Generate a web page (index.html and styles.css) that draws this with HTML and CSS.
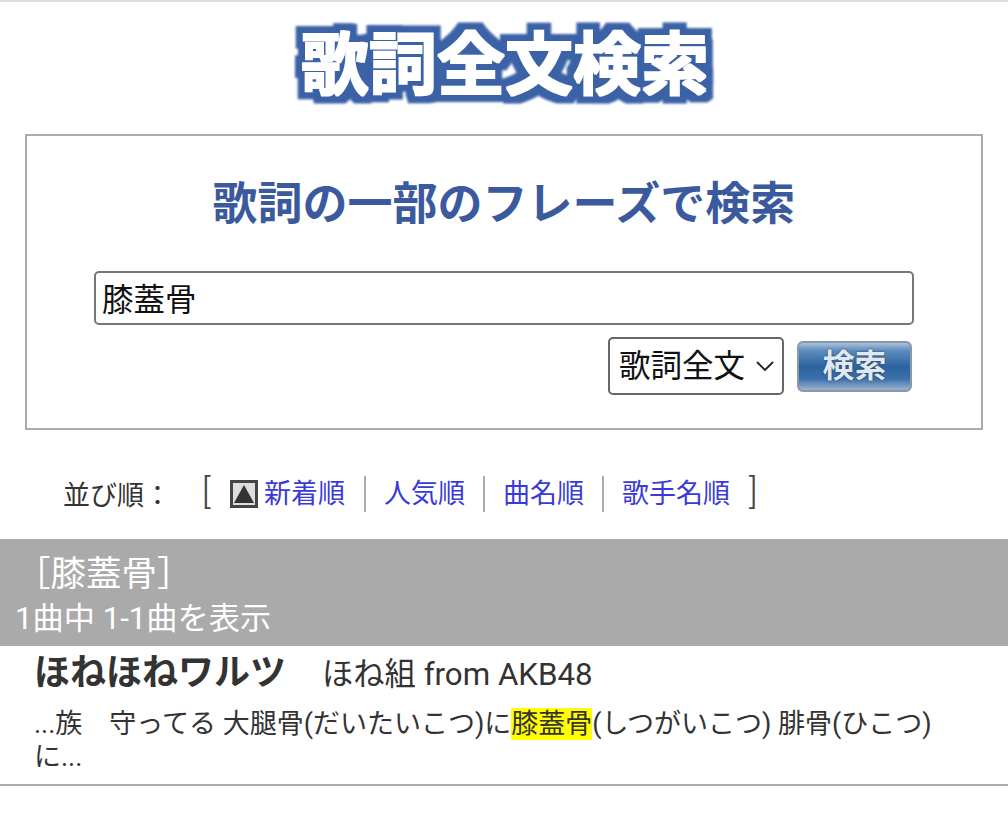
FILE: index.html
```html
<!DOCTYPE html>
<html lang="ja">
<head>
<meta charset="utf-8">
<title>歌詞全文検索</title>
<link rel="stylesheet" href="styles.css">
</head>
<body>
<svg class="defs" width="0" height="0" aria-hidden="true">
  <filter id="logo-outline" x="-10%" y="-30%" width="120%" height="160%" color-interpolation-filters="sRGB">
    <feMorphology in="SourceAlpha" operator="dilate" radius="8" result="fat"/>
    <feGaussianBlur in="fat" stdDeviation="1" result="soft"/>
    <feFlood flood-color="#3b62a6"/>
    <feComposite in2="soft" operator="in" result="edge"/>
    <feMorphology in="SourceGraphic" operator="dilate" radius="1" result="bold"/>
    <feGaussianBlur in="bold" stdDeviation="0.7" result="boldsoft"/>
    <feMerge><feMergeNode in="edge"/><feMergeNode in="boldsoft"/></feMerge>
  </filter>
</svg>
<header class="logo-wrap"><div class="logo">歌詞全文検索</div></header>
<section class="search-box">
  <h1 class="search-title">歌詞の一部のフレーズで検索</h1>
  <div class="query">膝蓋骨</div>
  <div class="controls">
    <div class="select"><span>歌詞全文</span>
      <svg class="chev" width="20" height="12" viewBox="0 0 20 12"><path d="M2 2l8 8 8-8" fill="none" stroke="#222" stroke-width="1.8"/></svg>
    </div>
    <div class="btn">検索</div>
  </div>
</section>
<nav class="sort">
  <span class="sort-label">並び順：</span>
  <span class="bracket open">[</span>
  <svg class="sort-icon" width="28" height="28" viewBox="0 0 28 28"><rect x="1.5" y="1.5" width="25" height="25" fill="#ddd" stroke="#444" stroke-width="3"/><path d="M14 5L24 23H4z" fill="#333"/></svg>
  <a class="sort-link first">新着順</a>
  <a class="sort-link">人気順</a>
  <a class="sort-link">曲名順</a>
  <a class="sort-link last">歌手名順</a>
  <span class="bracket">]</span>
</nav>
<section class="result-head">
  <div class="term">［膝蓋骨］</div>
  <div class="count">1曲中 1-1曲を表示</div>
</section>
<article class="song">
  <div class="song-line"><span class="song-title">ほねほねワルツ</span><span class="song-artist">ほね組 from AKB48</span></div>
  <p class="excerpt">...族　守ってる 大腿骨(だいたいこつ)に<mark class="hit">膝蓋骨</mark>(しつがいこつ) 腓骨(ひこつ)<br>に...</p>
</article>
</body>
</html>
```
FILE: styles.css
```css
* { box-sizing: border-box; }
html, body { margin: 0; padding: 0; background: #fff; }
body {
  width: 1008px;
  height: 815px;
  overflow: hidden;
  border-top: 2px solid #ddd;
  font-family: Roboto, "Noto Sans CJK JP", sans-serif;
  color: #333;
}
.defs { position: absolute; }
.logo-wrap { height: 132px; display: flex; justify-content: center; padding-top: 24px; }
.logo {
  font-size: 68px;
  font-weight: 700;
  line-height: 80px;
  height: 80px;
  color: #fff;
  filter: url(#logo-outline);
  margin-left: 2px;
  white-space: nowrap;
}
.search-box {
  margin: 0 25px;
  height: 296px;
  border: 2px solid #aaa;
  padding: 0 67px;
}
.search-title {
  margin: 41px 0 0;
  height: 56px;
  text-align: center;
  font-size: 45px;
  line-height: 56px;
  font-weight: 700;
  color: #3b5a9e;
  white-space: nowrap;
}
.query {
  margin-top: 38px;
  height: 54px;
  border: 2px solid #777;
  border-radius: 5px;
  padding: 5px 6px 0;
  font-size: 31.5px;
  line-height: 46px;
  color: #111;
}
.controls { display: flex; justify-content: flex-end; align-items: center; gap: 13px; margin-top: 12px; padding-right: 2px; }
.select {
  width: 176px;
  height: 58px;
  border: 2px solid #666;
  border-radius: 5px;
  padding: 0 0 7px 9px;
  display: flex;
  align-items: center;
  gap: 10px;
  font-size: 31.5px;
  color: #111;
}
.chev { flex: none; margin-top: 7px; }
.btn {
  width: 115px;
  height: 51px;
  border: 2px solid #8a98a8;
  border-radius: 6px;
  background: linear-gradient(#a8c0dc 0%, #5f8dbd 16%, #2c639f 50%, #3a70aa 76%, #9cb4cf 100%);
  color: #dfe8f0;
  font-size: 32px;
  font-weight: 700;
  line-height: 47px;
  text-align: center;
  text-shadow: 0 0 2px #234;
}
.sort { height: 109px; display: flex; align-items: center; font-size: 27px; color: #333; padding-left: 63px; padding-top: 18px; }
.sort-label { width: 139px; }
.bracket { font-size: 35px; font-weight: 300; width: 10px; line-height: 1; color: #444; margin-top: -2px; }
.bracket.open { width: 28px; }
.sort-icon { flex: none; margin-right: 6px; }
.sort-link { color: #3a3ad8; padding: 0 18px; height: 36px; line-height: 36px; border-right: 2px solid #aaa; white-space: nowrap; }
.sort-link.first { padding-left: 0; padding-right: 19px; }
.sort-link.last { border-right: 0; padding-right: 19px; }
.result-head { height: 107px; background: #aaa; color: #fff; padding-left: 15px; }
.term { font-size: 35.5px; line-height: 46px; padding-top: 12px; height: 60px; }
.count { font-size: 31.2px; line-height: 40px; }
.song { padding: 5px 34px 0; height: 140px; border-bottom: 2px solid #aaa; }
.song-line { display: flex; align-items: baseline; height: 51px; }
.song-title { font-size: 36px; font-weight: 700; line-height: 44px; color: #333; }
.song-artist { font-size: 31.3px; line-height: 44px; margin-left: 36px; color: #333; }
.excerpt { margin: 6px 0 0; font-size: 27px; line-height: 33px; color: #333; }
.hit { background: #ff0; color: #333; }
```
